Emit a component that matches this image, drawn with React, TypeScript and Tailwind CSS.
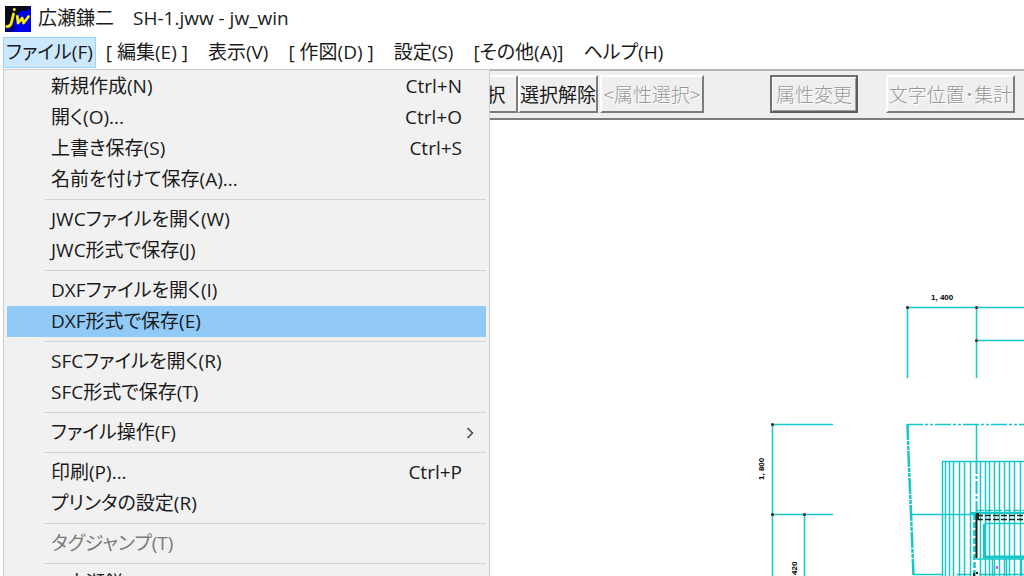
import { clsx } from "clsx";

interface MenuEntry {
  label: string;
  shortcut?: string;
  submenu?: boolean;
  disabled?: boolean;
  active?: boolean;
}

const MENU_BAR = [
  "ファイル(F)",
  "[ 編集(E) ]",
  "表示(V)",
  "[ 作図(D) ]",
  "設定(S)",
  "[その他(A)]",
  "ヘルプ(H)",
];

// each inner array is a block between separators
const FILE_MENU: MenuEntry[][] = [
  [
    { label: "新規作成(N)", shortcut: "Ctrl+N" },
    { label: "開く(O)...", shortcut: "Ctrl+O" },
    { label: "上書き保存(S)", shortcut: "Ctrl+S" },
    { label: "名前を付けて保存(A)..." },
  ],
  [{ label: "JWCファイルを開く(W)" }, { label: "JWC形式で保存(J)" }],
  [
    { label: "DXFファイルを開く(I)" },
    { label: "DXF形式で保存(E)", active: true },
  ],
  [{ label: "SFCファイルを開く(R)" }, { label: "SFC形式で保存(T)" }],
  [{ label: "ファイル操作(F)", submenu: true }],
  [
    { label: "印刷(P)...", shortcut: "Ctrl+P" },
    { label: "プリンタの設定(R)" },
  ],
  [{ label: "タグジャンプ(T)", disabled: true }],
  [{ label: "1 広瀬鎌二　SH-1.jww" }],
];

const HATCH = [
  942.5, 945.5, 949.5, 953.5, 959.5, 964.5, 970.5, 980.5, 985.5, 989.5, 994.5,
  999.5, 1004.5, 1009.5, 1014.5, 1020.5,
];

const AppIcon = () => (
  <svg viewBox="0 0 26 26" className="size-[26px] shrink-0" aria-hidden="true">
    <rect width="26" height="26" fill="#0000e8" />
    <path d="M0 0h25v3l-4 2-3-1-5 3-2 6-5 8-6 2z" fill="#0a0a18" />
    <path d="M0 22l8-3 3 3-4 4H0z" fill="#000078" />
    <g fill="none" stroke="#f4ee10" strokeWidth="2.8" strokeLinecap="round">
      <path d="M8.500 8L6.500 16.500Q5.500 21 1.800 20.500" />
      <path d="M9.300 3.500v.3" />
      <path d="M12.300 10.500l.8 6.500 4-5 1.500 5 5-6.500" strokeLinejoin="round" />
    </g>
  </svg>
);

const MenuItem = ({ label, shortcut, submenu, disabled, active }: MenuEntry) => (
  <li role="none">
    <button
      role="menuitem"
      disabled={disabled}
      className={clsx(
        "flex h-[31px] w-full items-center pl-11 text-left whitespace-pre",
        submenu ? "pr-3" : "pr-6",
        active && "bg-[#91c9f7]",
        disabled && "text-[#7a7a7a]",
      )}
    >
      <span className="flex-1">{label}</span>
      {shortcut && <span>{shortcut}</span>}
      {submenu && (
        <svg viewBox="0 0 8 12" className="h-3 w-2" aria-hidden="true">
          <path d="M1.500 1l5 5-5 5" fill="none" stroke="#444" strokeWidth="1.500" />
        </svg>
      )}
    </button>
  </li>
);

const FileMenu = () => (
  <div className="absolute top-full left-[3px] z-10 w-[487px] border border-[#ccc] bg-[#f1f1f1] px-[3px] pt-px pb-0.5">
    {FILE_MENU.map((group, i) => (
      <div key={i}>
        {i > 0 && <hr className="my-1 ml-[38px] h-px border-0 bg-[#d2d2d2]" />}
        <ul role="menu">
          {group.map((entry) => (
            <MenuItem key={entry.label} {...entry} />
          ))}
        </ul>
      </div>
    ))}
  </div>
);

interface ToolButtonProps {
  label: string;
  disabled?: boolean;
  framed?: boolean;
  className?: string;
}

const ToolButton = ({ label, disabled, framed, className }: ToolButtonProps) => (
  <button
    disabled={disabled}
    className={clsx(
      "h-[38px] shrink-0 overflow-hidden border-2 bg-[#efefef] text-[19px] leading-5 whitespace-nowrap",
      framed
        ? "border-t-[#707070] border-r-[#606060] border-b-[#606060] border-l-[#707070] shadow-[inset_1px_1px_0_#fff,inset_-1px_-1px_0_#a0a0a0]"
        : "border-t-white border-r-[#7c7c7c] border-b-[#7c7c7c] border-l-white",
      disabled && "text-[#989898] [text-shadow:1px_1px_0_#fff]",
      className,
    )}
  >
    {label}
  </button>
);

const Toolbar = () => (
  <div className="ml-1 flex h-[51px] shrink-0 items-center overflow-hidden border-t-2 border-b-2 border-t-[#b4b4b4] border-b-[#7c7c7c] bg-[#efefef] pb-0.5 pl-[432px] font-['Noto_Sans_CJK_JP',sans-serif] font-light">
    <ToolButton label="全選択" className="w-[82px] font-normal" />
    <ToolButton label="選択解除" className="w-20 font-normal" />
    <ToolButton label="<属性選択>" disabled className="ml-0.5 w-[104px]" />
    <ToolButton label="属性変更" disabled framed className="ml-[66px] w-[88px]" />
    <ToolButton label="文字位置･集計" disabled className="ml-7 w-[129px]" />
  </div>
);

const Drawing = () => (
  <svg
    viewBox="0 120 1024 456"
    preserveAspectRatio="xMinYMin slice"
    className="block h-full w-full"
    role="img"
    aria-label="SH-1"
  >
    <g fill="none" stroke="#16c7c7" strokeWidth="1.500">
      {/* upper dimension */}
      <path d="M907.500 378V307.500H1024M976.500 307v71M976.500 340.500H1024" />
      {/* left dimension */}
      <path d="M833 424.500H772.500V576M772 514.500h61M804.500 514v62" />
      {/* site boundary */}
      <path d="M907 424.500h117" strokeDasharray="16 2 3 2 3 2" />
      <path
        d="M907.500 424L908.500 455 911 514 913.500 576"
        strokeWidth="2.500"
        strokeDasharray="16 1 4 1 4 1"
      />
      <path d="M911 514.500h66M913 574.500h30M976.500 424v37" />
      {/* roof */}
      <path d="M942 461.500h82" />
      {HATCH.map((x) => (
        <path key={x} d={`M${x} 461V576`} />
      ))}
      <path d="M976.500 461v52" strokeWidth="2" strokeDasharray="13 2 3 2" />
      <path d="M970 513h54" strokeWidth="2" />
      <path d="M977 510.500h47" strokeDasharray="7 2" />
      <path d="M974.500 514v62" strokeWidth="2.500" strokeDasharray="6 2" />
      <path d="M984.500 523.500H1024M976 559h48M956.500 574.500h15M979 574.500h45" />
      <path d="M984.500 524v33H1024" strokeWidth="3" />
      <path d="M992.500 559v17M1006.500 559v17M1021.500 559v17" />
    </g>
    <g fill="none" stroke="#1c2020">
      <path d="M976.500 514v44" strokeWidth="2" />
      <path d="M977 515.500h47M977 519.500h47" strokeWidth="1.500" strokeDasharray="6 2" />
      <path d="M974 573v3M976 573h2" strokeWidth="2" />
    </g>
    <g fill="#222">
      <circle cx="907.500" cy="307.500" r="1.500" />
      <circle cx="976.500" cy="307.500" r="1.500" />
      <circle cx="976.500" cy="340.500" r="1.500" />
      <circle cx="772.500" cy="424.500" r="1.500" />
      <circle cx="772.500" cy="514.500" r="1.500" />
      <circle cx="804.500" cy="514.500" r="1.500" />
      <rect x="976" y="513" width="3" height="6" />
    </g>
    <rect x="996" y="566" width="2" height="3" fill="#ff30ff" />
    <g className="fill-black font-['Liberation_Sans',sans-serif] text-[8px] font-bold">
      <text x="931" y="300">1, 400</text>
      <text transform="translate(764 480) rotate(-90)">1, 800</text>
      <text transform="translate(797 575) rotate(-90)">420</text>
    </g>
  </svg>
);

export default function App() {
  return (
    <div className="flex h-screen flex-col overflow-hidden bg-white font-['Open_Sans','Noto_Sans_CJK_JP',sans-serif] text-[19px] text-[#1a1a1a] [font-feature-settings:'palt']">
      <header className="flex h-[37px] shrink-0 items-center gap-[7px] pl-[5px]">
        <AppIcon />
        <h1 className="text-[19px] whitespace-pre">広瀬鎌二　SH-1.jww - jw_win</h1>
      </header>

      <div className="relative h-8 shrink-0">
        <nav className="flex pl-[3px]">
          {MENU_BAR.map((label, i) => (
            <button
              key={label}
              className={clsx(
                "h-[31px] shrink-0 border whitespace-nowrap",
                i === 0
                  ? "border-[#99d1ff] bg-[#cce8ff] px-0.5"
                  : "border-transparent px-[9px]",
              )}
            >
              {label}
            </button>
          ))}
        </nav>
        <FileMenu />
      </div>

      <Toolbar />

      <main className="min-h-0 flex-1">
        <Drawing />
      </main>
    </div>
  );
}
